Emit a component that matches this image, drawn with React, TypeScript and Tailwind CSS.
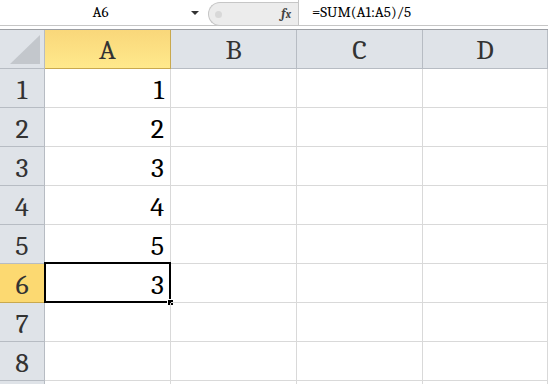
import React from 'react';

const cols = ['A', 'B', 'C', 'D'];
const values: Record<number, string> = { 1: '1', 2: '2', 3: '3', 4: '4', 5: '5', 6: '3' };
const rows = [1, 2, 3, 4, 5, 6, 7, 8, 9];

const FormulaBar = () => (
  <div className="flex h-[26px] bg-white border-b border-[#c6c6c6] text-[15px] text-black">
    {/* Name box */}
    <div className="relative flex w-[208px] items-center">
      <span className="flex-1 pl-[10px] text-center">A6</span>
      <span className="mr-[9px] mt-[1px] h-0 w-0 border-x-[4px] border-t-[4px] border-x-transparent border-t-[#333]" />
    </div>
    {/* fx splitter pill */}
    <div className="flex h-[24px] mt-[2px] w-[90px] items-center rounded-l-full border border-r-0 border-[#c6c6c6] bg-[#ececec]">
      <span className="ml-[6px] h-[7px] w-[7px] rounded-full bg-[#d8d8d8]" />
      <span className="ml-auto mr-[7px] text-[13px] italic font-bold text-[#444]">f<span className="text-[11px]">x</span></span>
    </div>
    <div className="w-px bg-[#c6c6c6]" />
    <div className="flex flex-1 items-center pl-[13px]">=SUM(A1:A5)/5</div>
  </div>
);

export default function App() {
  return (
    <div className="h-[384px] w-[548px] overflow-hidden bg-white font-serif">
      <FormulaBar />
      <div className="h-[3px] bg-white" />
      <div className="border-t border-[#9c9fa4]">
        <div className="grid grid-cols-[45px_126px_126px_126px_125px] auto-rows-[39px]">
          {/* header row */}
          <div className="relative border-r border-b border-[#b7bcc3] bg-[#dfe3e8]">
            <svg className="absolute left-[10px] top-[5px]" width="30" height="29" viewBox="0 0 30 29">
              <polygon points="30,0 30,29 0,29" fill="#c3c7cc" />
            </svg>
          </div>
          {cols.map((c) => (
            <div
              key={c}
              className={
                c === 'A'
                  ? 'flex items-end justify-center pb-[4px] leading-none border-r border-b border-[#c9a94e] bg-gradient-to-b from-[#f9d77a] to-[#ffe98c] text-[28px] text-[#333]'
                  : 'flex items-end justify-center pb-[4px] leading-none border-r border-b border-[#b7bcc3] bg-[#dfe3e8] text-[28px] text-[#333]'
              }
            >
              {c}
            </div>
          ))}
          {rows.map((r) => (
            <React.Fragment key={r}>
              <div
                className={
                  r === 6
                    ? 'flex items-end justify-center pb-[3px] leading-none border-r border-b border-[#c9a94e] bg-[#fcd971] text-[28px] text-[#333]'
                    : 'flex items-end justify-center pb-[3px] leading-none border-r border-b border-[#b7bcc3] bg-[#dfe3e8] text-[28px] text-[#333]'
                }
              >
                {r < 9 ? r : null}
              </div>
              {cols.map((c) => (
                <div
                  key={c}
                  className="relative flex items-end justify-end pb-[3px] pr-[6px] leading-none border-r border-b border-[#d9d9d9] text-[28px] text-black"
                >
                  {c === 'A' ? values[r] : null}
                  {c === 'A' && r === 6 && (
                    <>
                      <div className="absolute -left-[1px] -top-[2px] -right-[1px] -bottom-[1px] border-2 border-black" />
                      <div className="absolute -right-[3px] -bottom-[3px] h-[5px] w-[5px] bg-black outline outline-1 outline-white" />
                    </>
                  )}
                </div>
              ))}
            </React.Fragment>
          ))}
        </div>
      </div>
    </div>
  );
}
